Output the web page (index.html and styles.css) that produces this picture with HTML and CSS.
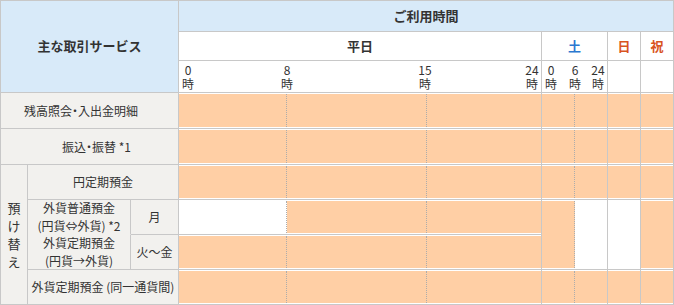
FILE: index.html
```html
<!DOCTYPE html>
<html lang="ja">
<head>
<meta charset="utf-8">
<title>主な取引サービス ご利用時間</title>
<link rel="stylesheet" href="styles.css">
</head>
<body>
<div class="tbl">
  <div class="c hd span3 rspan3">主な取引サービス</div>
  <div class="c hd span4">ご利用時間</div>

  <div class="c hd2">平日</div>
  <div class="c hd2 sat">土</div>
  <div class="c hd2 sun">日</div>
  <div class="c hd2 sun">祝</div>

  <div class="c ticks">
    <span class="tick tk0">0<br>時</span>
    <span class="tick tk8">8<br>時</span>
    <span class="tick tk15">15<br>時</span>
    <span class="tick tk24">24<br>時</span>
  </div>
  <div class="c ticks">
    <span class="tick ts0">0<br>時</span>
    <span class="tick ts6">6<br>時</span>
    <span class="tick ts24">24<br>時</span>
  </div>
  <div class="c blank"></div>
  <div class="c blank"></div>

  <!-- 残高照会 -->
  <div class="c lb span3 pr17">残高照会<span class="dot">・</span>入出金明細</div>
  <div class="c t"><span class="s w1 on"></span><span class="s w2 on"></span><span class="s on"></span></div>
  <div class="c t"><span class="s sa1 on"></span><span class="s on"></span></div>
  <div class="c t"><span class="s on"></span></div>
  <div class="c t"><span class="s on"></span></div>

  <!-- 振込・振替 -->
  <div class="c lb span3 pl14">振込<span class="dot">・</span>振替 *1</div>
  <div class="c t"><span class="s w1 on"></span><span class="s w2 on"></span><span class="s on"></span></div>
  <div class="c t"><span class="s sa1 on"></span><span class="s on"></span></div>
  <div class="c t"><span class="s on"></span></div>
  <div class="c t"><span class="s on"></span></div>

  <!-- 預け替え / 円定期預金 -->
  <div class="c lb rspan4 vert">預<br>け<br>替<br>え</div>
  <div class="c lb span2">円定期預金</div>
  <div class="c t"><span class="s w1 on"></span><span class="s w2 on"></span><span class="s on"></span></div>
  <div class="c t"><span class="s sa1 on"></span><span class="s on"></span></div>
  <div class="c t"><span class="s on"></span></div>
  <div class="c t"><span class="s on"></span></div>

  <!-- 外貨普通預金 月 -->
  <div class="c lb two nob">外貨普通預金<br>(円貨⇔外貨) *2</div>
  <div class="c lb">月</div>
  <div class="c t"><span class="s w1"></span><span class="s w2 on"></span><span class="s on"></span></div>
  <div class="c t rspan2"><span class="s sa1 on"></span><span class="s"></span></div>
  <div class="c t rspan2"><span class="s"></span></div>
  <div class="c t rspan2"><span class="s on"></span></div>

  <!-- 外貨定期預金 火〜金 -->
  <div class="c lb two">外貨定期預金<br>(円貨→外貨)</div>
  <div class="c lb">火〜金</div>
  <div class="c t"><span class="s w1 on"></span><span class="s w2 on"></span><span class="s on"></span></div>

  <!-- 外貨定期預金 (同一通貨間) -->
  <div class="c lb span2">外貨定期預金 (同一通貨間)</div>
  <div class="c t"><span class="s w1 on"></span><span class="s w2 on"></span><span class="s on"></span></div>
  <div class="c t"><span class="s sa1 on"></span><span class="s on"></span></div>
  <div class="c t"><span class="s on"></span></div>
  <div class="c t"><span class="s on"></span></div>
</div>
</body>
</html>
```

FILE: styles.css
```css
* { box-sizing: border-box; }

html, body {
  margin: 0;
  padding: 0;
  background: #fff;
}

body {
  font-family: "Noto Sans CJK JP", "Noto Sans", sans-serif;
  font-size: 12px;
  color: #333;
}

.tbl {
  display: grid;
  width: 674px;
  grid-template-columns: 27px 103px 48px 363px 66px 33px 33px;
  grid-template-rows: 31px 29px 32px 36px 36px 35px 35px 35px 35px;
  border-top: 1px solid #c8c8c8;
  border-left: 1px solid #c8c8c8;
}

.c {
  border-right: 1px solid #c8c8c8;
  border-bottom: 1px solid #c8c8c8;
  display: flex;
  align-items: center;
  justify-content: center;
  text-align: center;
  line-height: 1.3;
  white-space: nowrap;
}

.span2 { grid-column: span 2; }
.span3 { grid-column: span 3; }
.span4 { grid-column: span 4; }
.rspan2 { grid-row: span 2; }
.rspan3 { grid-row: span 3; }
.rspan4 { grid-row: span 4; }

.hd {
  background: #d8eaf9;
  font-size: 13px;
  font-weight: bold;
  color: #333;
}

.hd2 {
  background: #fff;
  font-size: 13px;
  font-weight: bold;
}

.hd2.sat { color: #2b78d0; }
.hd2.sun { color: #d9541f; }

.blank { background: #fff; }

.lb {
  background: #f2f1ee;
}

.pr17 { padding-right: 17px; }
.pl14 { padding-left: 14px; }

.dot {
  font-feature-settings: "halt";
}

.vert {
  line-height: 18px;
  font-size: 13px;
}

.two {
  line-height: 18px;
}

.nob {
  border-bottom-color: transparent;
}

/* time axis */
.ticks {
  position: relative;
  display: block;
  background: #fff;
}

.tick {
  position: absolute;
  top: 2px;
  transform: translateX(-50%);
  line-height: 14px;
  font-size: 12px;
  text-align: center;
}

.tk0 { left: 9px; }
.tk8 { left: 108px; }
.tk15 { left: 246px; }
.tk24 { left: 353px; }
.ts0 { left: 9px; }
.ts6 { left: 33px; }
.ts24 { left: 56px; }

/* timeline cells */
.t {
  padding: 1px 0;
  background: #fff;
  align-items: stretch;
  justify-content: flex-start;
}

.s {
  display: block;
  border-right: 1px dotted #acacac;
}

.s:last-child {
  border-right: 0;
  flex: 1;
}

.w1 { width: 108px; }
.w2 { width: 140px; }
.sa1 { width: 33px; }

.on { background: #ffcfa5; }
```
